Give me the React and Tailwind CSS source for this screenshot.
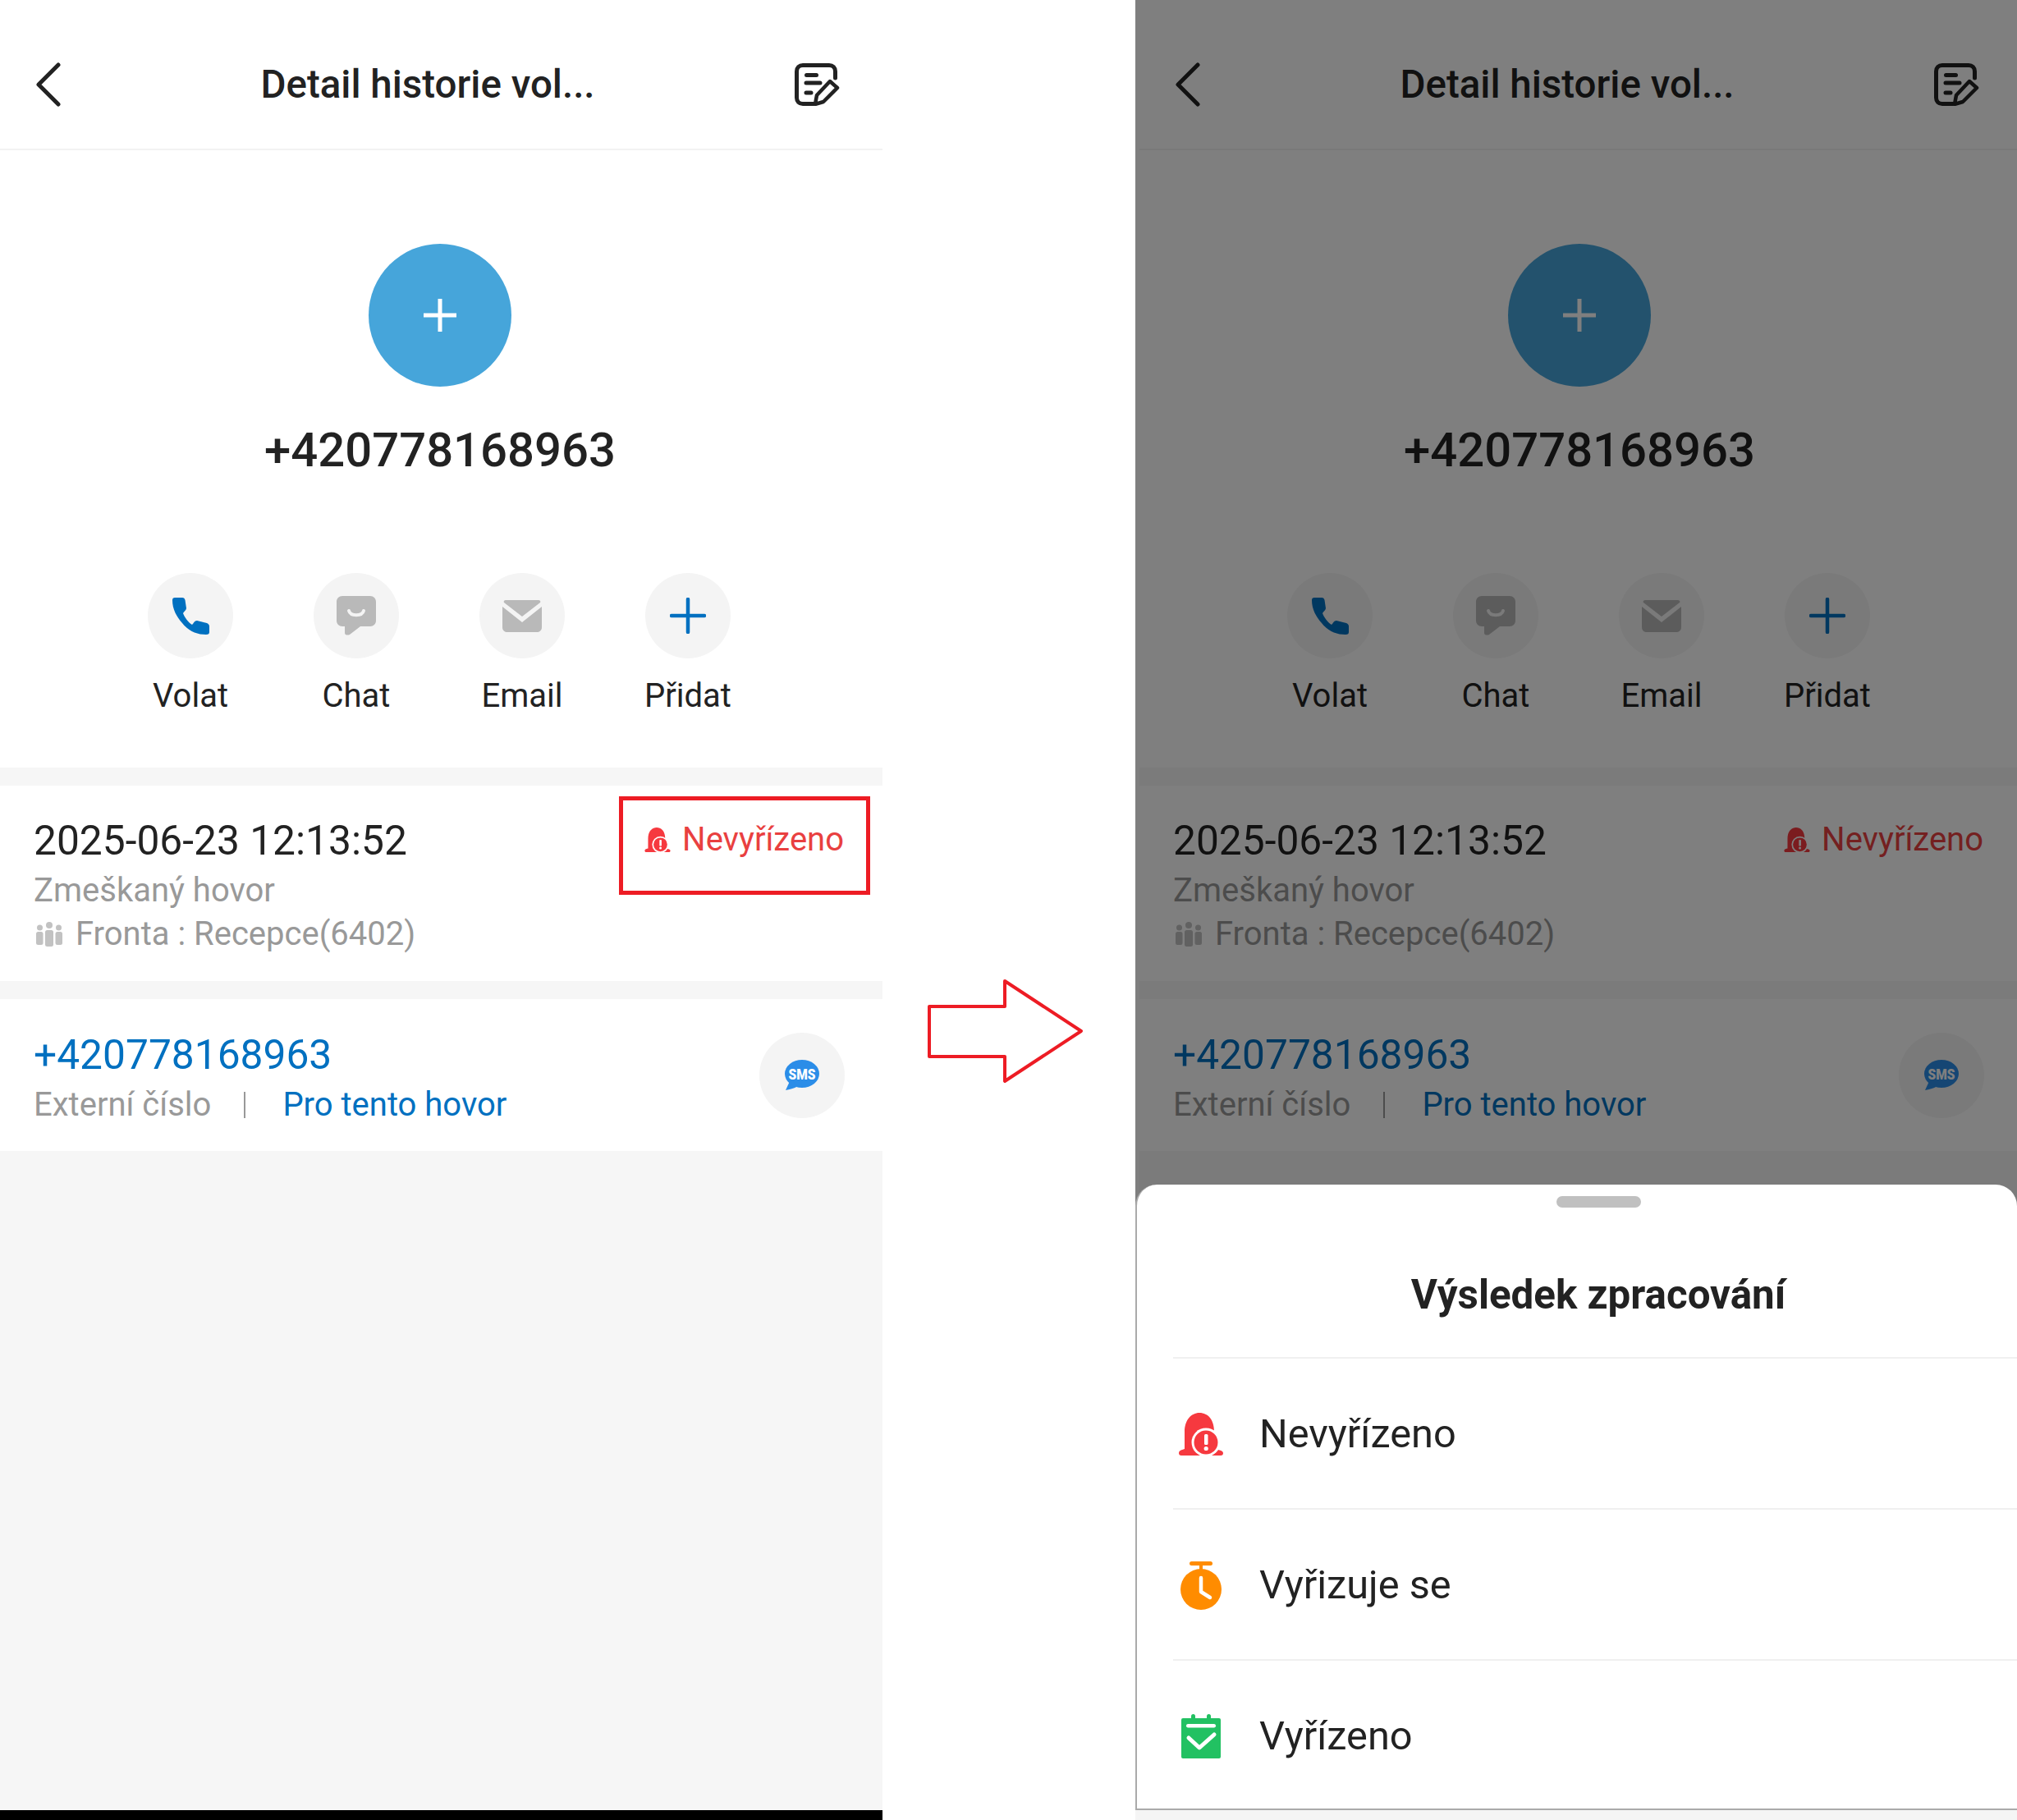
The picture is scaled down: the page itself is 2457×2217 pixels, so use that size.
import React from "react";

const BellIcon = ({ className }) => (
  <svg viewBox="0 0 54 52" className={className}>
    <path
      d="M7 44V23C7 9 15 0 25 0C36 0 43 9 43 23V44C46 45 54 45 54 49C54 51 53 52 51 52H3C1 52 0 51 0 49C0 45 5 45 7 44Z"
      fill="#f6393f"
    />
    <circle cx="33" cy="36" r="17.5" fill="#fff" />
    <circle cx="33" cy="36" r="14.5" fill="#f6393f" />
    <rect x="31" y="26" width="4.5" height="13" rx="1.5" fill="#fff" />
    <circle cx="33.2" cy="43.5" r="2.6" fill="#fff" />
  </svg>
);

const TimerIcon = ({ className }) => (
  <svg viewBox="0 0 50 59" className={className}>
    <rect x="11" y="0" width="28" height="5" rx="2.5" fill="#ff8c00" />
    <rect x="23" y="3" width="4" height="8" fill="#ff8c00" />
    <circle cx="25" cy="34" r="25" fill="#ff8c00" />
    <path d="M25 20V37L36 44" fill="none" stroke="#fff" strokeWidth="4.5" strokeLinecap="round" strokeLinejoin="round" />
  </svg>
);

const CalendarIcon = ({ className }) => (
  <svg viewBox="0 0 48 54" className={className}>
    <rect x="0" y="5" width="48" height="49" rx="2" fill="#22c162" />
    <rect x="12" y="0" width="5" height="12" rx="2.5" fill="#22c162" />
    <rect x="31" y="0" width="5" height="12" rx="2.5" fill="#22c162" />
    <rect x="6" y="12" width="36" height="4.5" rx="2.2" fill="#fff" />
    <path d="M9 29L22 41L40 25" fill="none" stroke="#fff" strokeWidth="5" strokeLinecap="round" strokeLinejoin="round" />
  </svg>
);

const EditIcon = () => (
  <svg viewBox="0 0 55 52" className="h-[52px] w-[55px]">
    <path
      d="M23 49.500H10C5.500 49.500 2.500 46.500 2.500 42V10C2.500 5.500 5.500 2.500 10 2.500H42C46.500 2.500 49.500 5.500 49.500 10V18"
      fill="none"
      stroke="#222"
      strokeWidth="5"
      strokeLinecap="round"
    />
    <rect x="12" y="12" width="17" height="5" rx="2.500" fill="#222" />
    <path d="M14 24H31" stroke="#222" strokeWidth="5" strokeLinecap="round" />
    <path d="M14 36H20" stroke="#222" strokeWidth="5" strokeLinecap="round" />
    <path
      d="M43 22L52 30L35 47L25 50L27 39Z"
      fill="#fff"
      stroke="#222"
      strokeWidth="4.500"
      strokeLinejoin="round"
    />
  </svg>
);

const PhoneIcon = () => (
  <svg viewBox="0 0 45 45" className="h-[45px] w-[45px]">
    <path
      d="M3 0H12C14 0 15 1 15.500 3L17 13C17 15 14 17 13 19C15 24 19 30 24 33C26 31 27 28 30 28L42 31C44 32 45 33 45 35V42C45 44 44 45 41 45C30 45 20 41 12 31C5 23 0 14 0 3C0 1 1 0 3 0Z"
      fill="#0070c0"
    />
  </svg>
);

const ChatIcon = () => (
  <svg viewBox="0 0 48 48" className="h-[48px] w-[48px]">
    <path
      d="M7 0H41C45 0 48 3 48 7V30C48 34 45 37 41 37H29L16 47C14 48 10 48 10 45V37H7C3 37 0 34 0 30V7C0 3 3 0 7 0Z"
      fill="#b9b9b9"
    />
    <path d="M15 18C17 25 31 25 33 18" fill="none" stroke="#f4f4f4" strokeWidth="4" strokeLinecap="round" />
  </svg>
);

const MailIcon = () => (
  <svg viewBox="0 0 48 39" className="h-[39px] w-[48px]">
    <path d="M4 0H44C46 0 47 2 46 3L24 20L2 3C1 2 2 0 4 0Z" fill="#b9b9b9" />
    <path d="M0 8L24 27L48 8V33C48 37 45 39 42 39H6C3 39 0 37 0 33Z" fill="#b9b9b9" />
  </svg>
);

const PlusIcon = () => (
  <svg viewBox="0 0 44 44" className="h-[44px] w-[44px]">
    <path d="M22 2V42M2 22H42" stroke="#0070c0" strokeWidth="4.500" strokeLinecap="round" />
  </svg>
);

const QueueIcon = () => (
  <svg viewBox="0 0 32 30" className="h-[30px] w-[32px]">
    <g fill="#c2c2c2">
      <circle cx="4.500" cy="7" r="3.500" />
      <circle cx="16" cy="4" r="4" />
      <circle cx="27.500" cy="7" r="3.500" />
      <rect x="0" y="12" width="8.500" height="16" rx="2.500" />
      <rect x="11" y="10" width="10" height="20" rx="2.500" />
      <rect x="23.500" y="12" width="8.500" height="16" rx="2.500" />
    </g>
  </svg>
);

const SmsIcon = () => (
  <svg viewBox="0 0 42 37" className="h-[37px] w-[42px]">
    <ellipse cx="21" cy="17" rx="21" ry="17" fill="#2b8de8" />
    <path d="M7 24L1 37C6 36 11 35 16 32Z" fill="#2b8de8" />
    <text
      x="4.500"
      y="23.500"
      fontSize="18"
      fontWeight="900"
      fill="#fff"
      fontFamily="Roboto, sans-serif"
      textLength="33"
      lengthAdjust="spacingAndGlyphs"
    >
      SMS
    </text>
  </svg>
);

const ACTIONS = [
  { label: "Volat", icon: <PhoneIcon /> },
  { label: "Chat", icon: <ChatIcon /> },
  { label: "Email", icon: <MailIcon /> },
  { label: "Přidat", icon: <PlusIcon /> },
];

function CallScreen({ highlight }) {
  return (
    <div className="flex h-full w-[1075px] flex-col bg-[#f6f6f6] text-[#222]">
      <div className="flex h-[183px] items-center justify-between border-b-2 border-[#f2f2f2] bg-white pl-[44px] pr-[52px] pt-[24px]">
        <svg viewBox="0 0 30 54" className="h-[54px] w-[30px]">
          <path d="M27 3L3 27L27 51" fill="none" stroke="#222" strokeWidth="5" strokeLinecap="round" strokeLinejoin="round" />
        </svg>
        <p className="text-[47.500px] leading-[60px] font-medium">Detail historie vol...</p>
        <EditIcon />
      </div>

      <div className="flex flex-col items-center bg-white pr-[3px] pt-[114px]">
        <div className="flex h-[174px] w-[174px] items-center justify-center rounded-full bg-[#46a5da]">
          <svg viewBox="0 0 40 40" className="h-[40px] w-[40px]">
            <path d="M20 0V40M0 20H40" stroke="#fff" strokeWidth="5" />
          </svg>
        </div>
        <p className="mt-[42px] text-[58px] leading-[70px] font-medium">+420778168963</p>
      </div>

      <div className="flex bg-white pb-[63px] pl-[131px] pt-[115px]">
        {ACTIONS.map((action) => (
          <div key={action.label} className="flex w-[202px] flex-col items-center">
            <div className="flex h-[104px] w-[104px] items-center justify-center rounded-full bg-[#f4f4f4]">
              {action.icon}
            </div>
            <p className="mt-[22px] text-[40px] leading-[48px]">{action.label}</p>
          </div>
        ))}
      </div>

      <div className="relative mt-[22px] flex h-[238px] justify-between bg-white pl-[41px] pr-[47px]">
        <div className="pt-[37px]">
          <p className="text-[49.700px] leading-[60px]">2025-06-23 12:13:52</p>
          <p className="mt-[5px] text-[40px] leading-[52px] text-[#999]">Zmeškaný hovor</p>
          <div className="mt-px flex items-center gap-[16px] pl-[3px] text-[40px] leading-[52px] text-[#999]">
            <QueueIcon />
            <span>Fronta : Recepce(6402)</span>
          </div>
        </div>
        <div className="flex h-[92px] items-center gap-[14px] pt-[40px] text-[40px] text-[#e94040]">
          <BellIcon className="h-[30px] w-[32px]" />
          <span>Nevyřízeno</span>
        </div>
        {highlight && (
          <div className="absolute left-[754px] top-[13px] h-[120px] w-[306px] border-[5px] border-[#ed1c24]" />
        )}
      </div>

      <div className="mt-[22px] flex h-[185px] items-center justify-between bg-white pl-[41px] pr-[46px]">
        <div className="pt-[8px]">
          <p className="text-[49.700px] leading-[60px] text-[#0070c0]">+420778168963</p>
          <div className="mt-[5px] flex items-center text-[40px] leading-[52px]">
            <span className="text-[#999]">Externí číslo</span>
            <span className="ml-[40px] h-[32px] w-[2px] bg-[#999]" />
            <span className="ml-[45px] text-[#0070c0]">Pro tento hovor</span>
          </div>
        </div>
        <div className="flex h-[104px] w-[104px] items-center justify-center rounded-full bg-[#f4f4f4]">
          <SmsIcon />
        </div>
      </div>
    </div>
  );
}

const RESULTS = [
  { label: "Nevyřízeno", icon: <BellIcon className="h-[52px] w-[54px]" /> },
  { label: "Vyřizuje se", icon: <TimerIcon className="h-[59px] w-[50px]" /> },
  { label: "Vyřízeno", icon: <CalendarIcon className="h-[54px] w-[48px]" /> },
];

export default function App() {
  return (
    <div className="flex h-[2217px] w-[2457px] overflow-hidden bg-white font-['Roboto',sans-serif]">
      <div className="flex w-[1075px] flex-col">
        <div className="h-[2205px]">
          <CallScreen highlight />
        </div>
        <div className="h-[12px] bg-black" />
      </div>

      <div className="w-[308px] pl-[55px] pt-[1193px]">
        <svg viewBox="0 0 190 126" className="h-[126px] w-[190px]">
          <path
            d="M2 33H94V2L187 63L94 124V94H2Z"
            fill="none"
            stroke="#ed1c24"
            strokeWidth="4"
            strokeLinejoin="round"
          />
        </svg>
      </div>

      <div className="flex w-[1074px] flex-col bg-[#f5f5f5]">
        <div className="relative h-[2205px] overflow-hidden bg-white pl-[5px]">
          <CallScreen />
          <div className="absolute inset-0 bg-black/50" />
          <div className="absolute inset-x-0 bottom-0 h-[762px] rounded-t-[26px] border-b-2 border-l-2 border-[#aaa] bg-white">
            <div className="pl-[52px] pt-[14px]">
              <div className="mx-auto h-[14px] w-[103px] rounded-full bg-[#c0c0c0]" />
              <p className="mt-[76px] text-center text-[49.300px] leading-[60px] font-bold text-[#222]">
                Výsledek zpracování
              </p>
            </div>
            <div className="ml-[44px] mt-[46px]">
              {RESULTS.map((row) => (
                <div
                  key={row.label}
                  className="flex h-[184px] items-center gap-[39px] border-t-2 border-[#f0f0f0] pt-[2px] text-[48.700px] text-[#222]"
                >
                  <div className="flex w-[66px] justify-center pl-[2px]">{row.icon}</div>
                  <span>{row.label}</span>
                </div>
              ))}
            </div>
          </div>
        </div>
      </div>
    </div>
  );
}
